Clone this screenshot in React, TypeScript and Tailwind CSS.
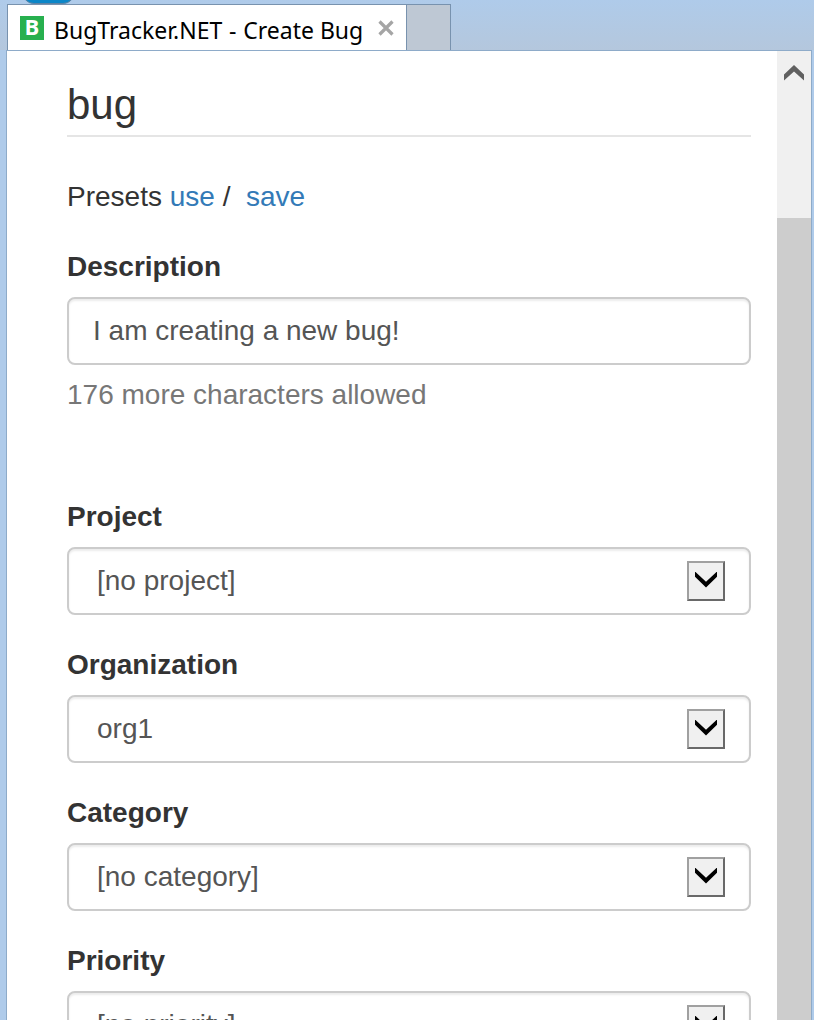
const fields = [
  { label: "Project", value: "[no project]" },
  { label: "Organization", value: "org1" },
  { label: "Category", value: "[no category]" },
  { label: "Priority", value: "[no priority]" },
];

const inputBox =
  "flex h-[68px] items-center rounded-lg border-2 border-[#ccc] bg-white pr-6 text-[#555] shadow-[inset_0_2px_2px_rgba(0,0,0,0.075)]";

function TabStrip() {
  return (
    <header className="relative flex h-[50px] shrink-0 overflow-hidden bg-linear-to-b from-[#afcbea] to-[#b4c7dd] pl-[7px] pt-1">
      <div className="absolute -top-7 left-[22px] h-8 w-[53px] rounded-xl border border-[#5f83a3] bg-[#0b86c8]" />
      <div className="relative flex w-[400px] items-start border border-b-0 border-[#7892ae] bg-white pl-3 pt-[9px]">
        <span className="mt-0.5 flex size-6 shrink-0 items-center justify-center bg-[#27b04f] pb-[5px] font-['Open_Sans',sans-serif] text-[22px] font-bold leading-6 text-white">
          B
        </span>
        <span className="ml-2.5 w-[310px] whitespace-nowrap font-['Noto_Sans',sans-serif] text-[23px] leading-8 text-black">
          BugTracker.NET <span className="inline-block w-[9px] text-center">-</span> Create Bug
        </span>
        <svg width="16" height="16" viewBox="0 0 16 16" className="ml-[14px] mt-[6px] shrink-0" stroke="#a5a5a5" strokeWidth="3.2">
          <path d="M1.5 1.5 14.5 14.5M14.5 1.5 1.5 14.5" />
        </svg>
      </div>
      <div className="relative w-11 border border-b-0 border-l-0 border-[#7892ae] bg-[#bec8d4]" />
    </header>
  );
}

function DropButton() {
  return (
    <span className="flex h-10 w-[38px] items-start justify-center border-2 border-b-[#696969] border-l-[#a0a0a0] border-r-[#696969] border-t-[#a0a0a0] bg-[#f0f0f0] pt-[9px]">
      <svg width="22" height="16" viewBox="0 0 22 16">
        <path d="M0 -0.5 11 9.8 22 -0.5V4.8L11 15.6 0 4.8Z" fill="#000" />
      </svg>
    </span>
  );
}

export default function App() {
  return (
    <div className="flex h-[1020px] w-[814px] flex-col overflow-hidden bg-[#afcbea] font-['Liberation_Sans',Arial,sans-serif] text-[28px] leading-10 text-[#333]">
      <TabStrip />
      <div className="ml-1.5 mr-0.5 flex min-h-0 flex-1 border border-b-0 border-[#8eabc9] bg-white">
        <main className="min-w-0 flex-1 overflow-hidden pl-[60px] pr-[26px]">
          <h1 className="h-[86px] border-b-2 border-[#e5e5e5] pt-[31px] text-[42px] leading-[46px]">bug</h1>
          <p className="mt-10 whitespace-pre">
            Presets <a className="text-[#337ab7]">use</a> /  <a className="text-[#337ab7]">save</a>
          </p>
          <div className="mt-[30px] h-[250px]">
            <div className="mb-2.5 font-bold">Description</div>
            <div className={`${inputBox} pl-6`}>I am creating a new bug!</div>
            <p className="mt-2.5 text-[#777]">176 more characters allowed</p>
          </div>
          {fields.map((f) => (
            <div key={f.label} className="mb-[30px]">
              <div className="mb-2.5 font-bold">{f.label}</div>
              <div className={`${inputBox} justify-between pl-7`}>
                <span>{f.value}</span>
                <DropButton />
              </div>
            </div>
          ))}
        </main>
        <aside className="flex w-[34px] shrink-0 flex-col bg-[#cdcdcd]">
          <div className="flex h-[167px] justify-center bg-[#f0f0f0] pt-3.5">
            <svg width="20" height="16" viewBox="0 0 20 16">
              <path d="M0 9.5 10 0 20 9.5V15.5L10 6.5 0 15.5Z" fill="#606060" />
            </svg>
          </div>
        </aside>
      </div>
    </div>
  );
}
